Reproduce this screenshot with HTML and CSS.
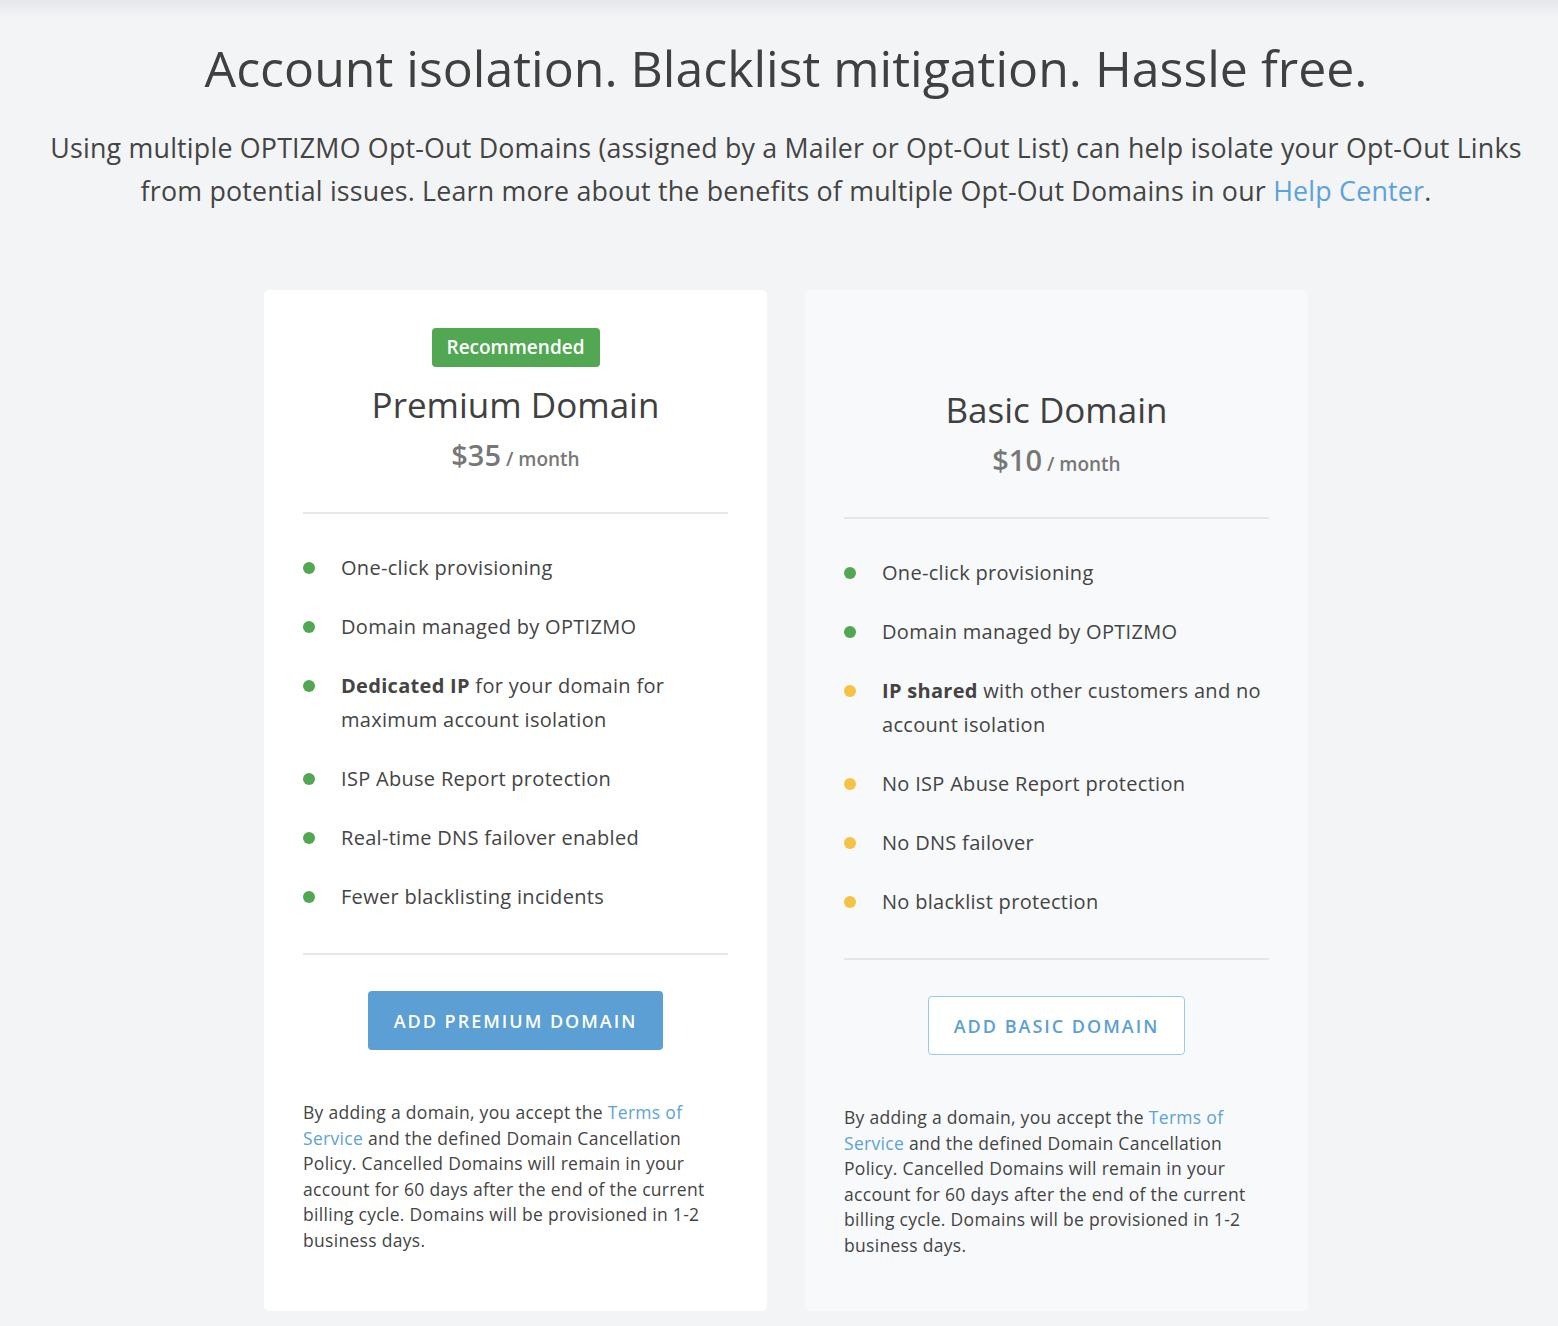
FILE: index.html
```html
<!DOCTYPE html>
<html lang="en">
<head>
    <meta charset="UTF-8">
    <meta name="viewport" content="width=device-width, initial-scale=1.0">
    <title>Opt-Out Domains</title>
    <link rel="stylesheet" href="styles.css">
</head>
<body>
    <main class="page">
        <h1 class="page__title">Account isolation. Blacklist mitigation. Hassle free.</h1>
        <p class="page__intro">
            Using multiple OPTIZMO Opt-Out Domains (assigned by a Mailer or Opt-Out List) can help isolate your Opt-Out Links
            from potential issues. Learn more about the benefits of multiple Opt-Out Domains in our <a href="#" class="link">Help Center</a>.
        </p>

        <div class="plans">
            <div class="plan plan--premium">
                <div class="plan__head">
                    <span class="plan__badge">Recommended</span>
                    <h2 class="plan__name">Premium Domain</h2>
                    <div class="plan__price"><span class="plan__amount">$35</span> / month</div>
                </div>
                <ul class="plan__features">
                    <li class="feature feature--yes">One-click provisioning</li>
                    <li class="feature feature--yes">Domain managed by OPTIZMO</li>
                    <li class="feature feature--yes"><b>Dedicated IP</b> for your domain for maximum account isolation</li>
                    <li class="feature feature--yes">ISP Abuse Report protection</li>
                    <li class="feature feature--yes">Real-time DNS failover enabled</li>
                    <li class="feature feature--yes">Fewer blacklisting incidents</li>
                </ul>
                <div class="plan__action">
                    <button class="btn btn--solid">Add Premium Domain</button>
                </div>
                <p class="plan__terms">
                    By adding a domain, you accept the <a href="#" class="link">Terms of Service</a> and the defined Domain Cancellation
                    Policy. Cancelled Domains will remain in your account for 60 days after the end of the current billing cycle.
                    Domains will be provisioned in 1-2 business days.
                </p>
            </div>

            <div class="plan plan--basic">
                <div class="plan__head">
                    <h2 class="plan__name">Basic Domain</h2>
                    <div class="plan__price"><span class="plan__amount">$10</span> / month</div>
                </div>
                <ul class="plan__features">
                    <li class="feature feature--yes">One-click provisioning</li>
                    <li class="feature feature--yes">Domain managed by OPTIZMO</li>
                    <li class="feature feature--warn"><b>IP shared</b> with other customers and no account isolation</li>
                    <li class="feature feature--warn">No ISP Abuse Report protection</li>
                    <li class="feature feature--warn">No DNS failover</li>
                    <li class="feature feature--warn">No blacklist protection</li>
                </ul>
                <div class="plan__action">
                    <button class="btn btn--outline">Add Basic Domain</button>
                </div>
                <p class="plan__terms">
                    By adding a domain, you accept the <a href="#" class="link">Terms of Service</a> and the defined Domain Cancellation
                    Policy. Cancelled Domains will remain in your account for 60 days after the end of the current billing cycle.
                    Domains will be provisioned in 1-2 business days.
                </p>
            </div>
        </div>
    </main>
</body>
</html>
```

FILE: styles.css
```css
html{
    font-family: "Open Sans", "Noto Sans", sans-serif;
    color: #444;
}
body{
    margin: 0;
    min-height: 1326px;
    background: linear-gradient(#e6e7ea, #f3f4f6 18px) no-repeat, #f3f4f6;
}
.page{
    padding: 34px 0 0 14px;
    text-align: center;
}
.page__title{
    margin: 0;
    font-size: 50px;
    font-weight: 400;
    line-height: 68px;
    color: #404040;
}
.page__intro{
    width: 1500px;
    margin: 24px auto 0;
    font-size: 26.8px;
    line-height: 43px;
    letter-spacing: 0.2px;
}
.link{
    color: #5ba3d9;
    text-decoration: none;
}

.plans{
    display: flex;
    justify-content: center;
    gap: 38px;
    margin-top: 78px;
}
.plan{
    width: 503px;
    box-sizing: border-box;
    padding: 38px 39px 52px;
    border-radius: 5px;
    background: #fff;
    text-align: left;
}
.plan--basic{
    background: #f8f9fa;
}
.plan__head{
    text-align: center;
    padding-bottom: 35px;
    border-bottom: 2px solid #e7e7e7;
}
.plan--basic .plan__head{
    padding-top: 59px;
}
.plan__badge{
    display: inline-block;
    height: 39px;
    padding: 0 15px;
    border-radius: 4px;
    background: #52a753;
    color: #fff;
    font-size: 19px;
    font-weight: 600;
    line-height: 39px;
}
.plan__name{
    margin: 15px 0 0;
    font-size: 35px;
    font-weight: 400;
    line-height: 46px;
    color: #404040;
}
.plan--basic .plan__name{
    margin-top: 0;
}
.plan__price{
    margin-top: 9px;
    line-height: 36px;
    font-size: 19px;
    font-weight: 600;
    color: #777;
}
.plan__amount{
    font-size: 29px;
}

.plan__features{
    list-style: none;
    margin: 0;
    padding: 37px 0 39px;
    border-bottom: 2px solid #e7e7e7;
}
.feature{
    position: relative;
    padding-left: 38px;
    font-size: 20px;
    line-height: 34px;
    letter-spacing: 0.3px;
}
.feature + .feature{
    margin-top: 25px;
}
.feature b{
    font-weight: 700;
}
.feature::before{
    content: "";
    position: absolute;
    left: 0;
    top: 11px;
    width: 12px;
    height: 12px;
    border-radius: 50%;
}
.feature--yes::before{
    background: #52a753;
}
.feature--warn::before{
    background: #f5c243;
}

.plan__action{
    padding-top: 36px;
    text-align: center;
}
.btn{
    height: 59px;
    border-radius: 4px;
    font-family: inherit;
    font-size: 18px;
    font-weight: 600;
    letter-spacing: 2px;
    text-transform: uppercase;
    cursor: pointer;
}
.btn--solid{
    width: 295px;
    border: none;
    background: #5b9fd4;
    color: #fff;
}
.btn--outline{
    width: 257px;
    border: 1px solid #9dc8ea;
    background: #fff;
    color: #5b9fd4;
}
.plan__terms{
    margin: 50px 0 0;
    font-size: 17.5px;
    line-height: 25.6px;
    letter-spacing: 0.3px;
}
```
